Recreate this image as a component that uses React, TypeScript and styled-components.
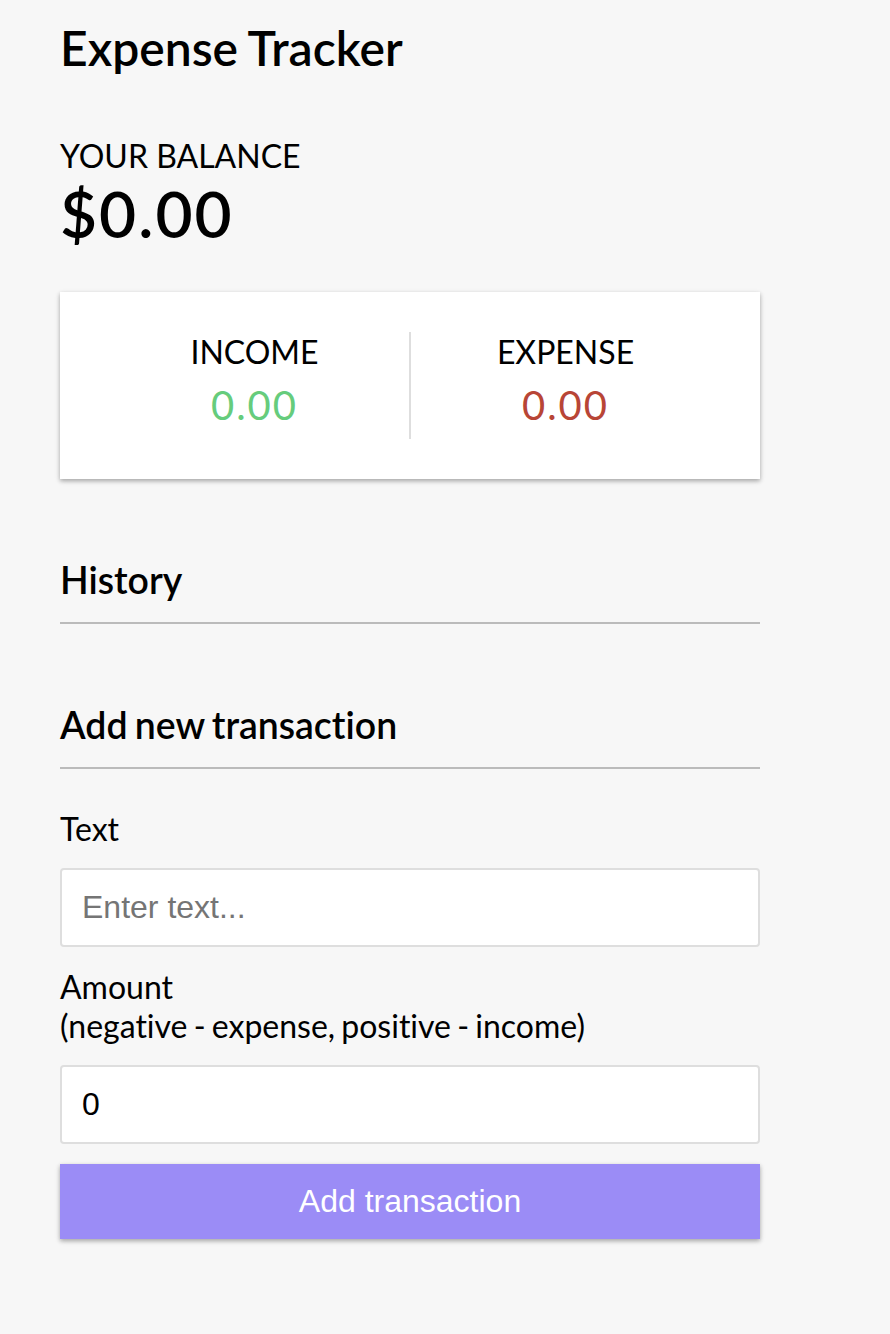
import React, { useState } from "react";
import styled, { createGlobalStyle } from "styled-components";

const GlobalStyle = createGlobalStyle`
  * { box-sizing: border-box; }
  body {
    margin: 0;
    background: #f7f7f7;
    font-family: Lato, "Open Sans", sans-serif;
    font-variant-ligatures: no-common-ligatures;
  }
`;

const Page = styled.div`
  min-height: 1334px;
  padding: 19px 0 0 60px;
`;

const Container = styled.div`
  width: 700px;
`;

const Title = styled.h2`
  margin: 0;
  font-size: 48px;
  font-weight: 600;
  letter-spacing: 0;
  word-spacing: -1px;
`;

const BalanceLabel = styled.h4`
  margin: 60px 0 0;
  font-size: 32px;
  font-weight: 400;
  text-transform: uppercase;
`;

const Balance = styled.h1`
  margin: 0;
  font-size: 64px;
  font-weight: 600;
  letter-spacing: 2px;
`;

const Card = styled.div`
  display: flex;
  justify-content: space-between;
  margin: 40px 0;
  padding: 40px;
  background: #fff;
  box-shadow: 0 2px 6px rgba(0, 0, 0, 0.12), 0 2px 4px rgba(0, 0, 0, 0.24);
`;

const Column = styled.div<{ $divider?: boolean }>`
  flex: 1;
  text-align: center;
  border-right: ${(p) => (p.$divider ? "2px solid #dedede" : "none")};
`;

const ColumnTitle = styled.h4`
  margin: 0;
  font-size: 32px;
  font-weight: 400;
  text-transform: uppercase;
`;

const Money = styled.p<{ $tone: "plus" | "minus" }>`
  margin: 10px 0;
  font-size: 40px;
  letter-spacing: 2px;
  color: ${(p) => (p.$tone === "plus" ? "#66cc7c" : "#b84536")};
`;

const SectionTitle = styled.h3`
  margin: 78px 0 20px;
  padding-bottom: 20px;
  border-bottom: 2px solid #bbb;
  font-size: 37.44px;
  font-weight: 600;
  word-spacing: -2px;
`;

const Form = styled.form``;

const Field = styled.div``;

const Label = styled.label`
  display: inline-block;
  margin: 21px 0 20px;
  font-size: 32px;
  line-height: 1.2;
  word-spacing: -2px;
`;

const Input = styled.input`
  display: block;
  width: 100%;
  padding: 19px 20px;
  border: 2px solid #dedede;
  border-radius: 4px;
  font-family: "Liberation Sans", Arial, sans-serif;
  font-size: 32px;
  color: #000;
  background: #fff;
  outline: none;

  &::placeholder {
    color: #757575;
  }
`;

const Button = styled.button`
  display: block;
  width: 100%;
  margin: 20px 0 60px;
  padding: 19px 20px;
  border: 0;
  background: #9b8cf6;
  color: #fff;
  font-family: "Liberation Sans", Arial, sans-serif;
  font-size: 32px;
  cursor: pointer;
  box-shadow: 0 2px 6px rgba(0, 0, 0, 0.12), 0 2px 4px rgba(0, 0, 0, 0.24);
`;

export default function App() {
  const [text, setText] = useState("");
  const [amount, setAmount] = useState("0");

  return (
    <Page>
      <GlobalStyle />
      <Container>
        <Title>Expense Tracker</Title>

        <BalanceLabel>Your Balance</BalanceLabel>
        <Balance>$0.00</Balance>

        <Card>
          <Column $divider>
            <ColumnTitle>Income</ColumnTitle>
            <Money $tone="plus">0.00</Money>
          </Column>
          <Column>
            <ColumnTitle>Expense</ColumnTitle>
            <Money $tone="minus">0.00</Money>
          </Column>
        </Card>

        <SectionTitle>History</SectionTitle>

        <SectionTitle>Add new transaction</SectionTitle>
        <Form onSubmit={(e) => e.preventDefault()}>
          <Field>
            <Label htmlFor="text">Text</Label>
            <Input
              id="text"
              type="text"
              placeholder="Enter text..."
              value={text}
              onChange={(e) => setText(e.target.value)}
            />
          </Field>
          <Field>
            <Label htmlFor="amount">
              Amount <br />
              (negative - expense, positive - income)
            </Label>
            <Input
              id="amount"
              type="number"
              value={amount}
              onChange={(e) => setAmount(e.target.value)}
            />
          </Field>
          <Button type="submit">Add transaction</Button>
        </Form>
      </Container>
    </Page>
  );
}
